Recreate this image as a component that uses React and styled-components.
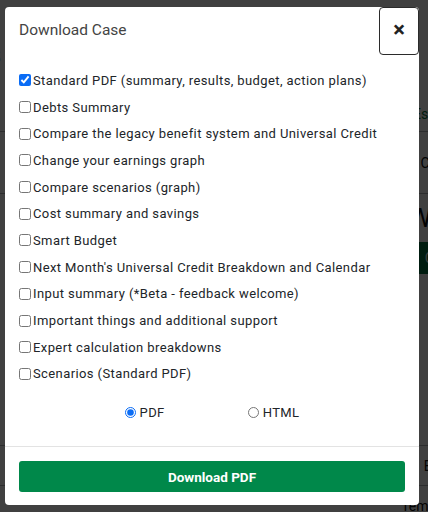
import React, { useState } from 'react';
import styled, { createGlobalStyle } from 'styled-components';

const GlobalStyle = createGlobalStyle`
  html, body {
    margin: 0;
    padding: 0;
  }
  body {
    font-family: Roboto, "Liberation Sans", sans-serif;
    color: #212529;
  }
  * {
    box-sizing: border-box;
  }
`;

// Page behind the dialog
const Page = styled.div`
  position: relative;
  width: 428px;
  height: 512px;
  overflow: hidden;
  background: #fff;
`;

const BackContent = styled.div`
  width: 470px;
  padding-top: 36px;
  display: flex;
  flex-direction: column;
`;

const BackHeading = styled.h1`
  margin: 0 0 0 -14px;
  font-size: 30px;
  font-weight: 400;
  height: 60px;
`;

const BackRow = styled.div`
  height: ${(p) => p.$h || 40}px;
  display: flex;
  align-items: center;
  justify-content: flex-end;
  padding-right: 2px;
  font-size: ${(p) => (p.$big ? 26 : 14)}px;
  color: ${(p) => (p.$link ? '#00703c' : '#0b0c0c')};
  border-bottom: ${(p) => (p.$line ? '1px solid #b1b4b6' : 'none')};
  white-space: nowrap;
`;

const BackBar = styled.span`
  height: 100%;
  padding: 0 8px;
  display: flex;
  align-items: center;
  background: #00703c;
  color: #e6f2ec;
`;

const Overlay = styled.div`
  position: absolute;
  inset: 0;
  background: rgba(0, 0, 0, 0.75);
  padding: 7px 9px 7px 5px;
  display: flex;
`;

// Dialog
const Modal = styled.div`
  flex: 1;
  background: #fff;
  border-radius: 4px;
  display: flex;
  flex-direction: column;
`;

const Header = styled.div`
  display: flex;
  justify-content: space-between;
  align-items: flex-start;
  height: 60px;
`;

const Title = styled.h5`
  margin: 0;
  padding: 13px 0 0 14px;
  font-size: 15.5px;
  font-weight: 400;
  color: #444;
  line-height: 20px;
`;

const CloseButton = styled.button`
  width: 40px;
  height: 48px;
  border: 1.5px solid #2b2b2b;
  border-radius: 4px;
  background: #fff;
  font-family: inherit;
  font-size: 22px;
  font-weight: 700;
  color: #222;
  line-height: 1;
  padding: 0 0 3px;
  cursor: pointer;
`;

const Body = styled.div`
  padding: 0 14px;
  flex: 1;
  display: flex;
  flex-direction: column;
`;

const CheckList = styled.div`
  display: flex;
  flex-direction: column;
`;

const CheckRow = styled.label`
  height: 26.7px;
  display: flex;
  align-items: center;
  gap: 1px;
  font-size: 13px;
  letter-spacing: 0.4px;
  color: #212529;
  white-space: nowrap;

  input {
    width: 12px;
    height: 12px;
    margin: 0 1px 0 0;
    accent-color: #0a6cf5;
  }
`;

const FormatRow = styled.div`
  margin-top: 15px;
  height: 20px;
  display: flex;
  justify-content: center;
  gap: 83px;
  padding-left: 0;
`;

const RadioLabel = styled.label`
  display: flex;
  align-items: center;
  gap: 4px;
  font-size: 13px;
  letter-spacing: 0.4px;
  color: #212529;

  input {
    width: 11px;
    height: 11px;
    margin: 0;
    accent-color: #0a6cf5;
  }
`;

const Footer = styled.div`
  border-top: 1px solid #e3e3e3;
  padding: 14px 14px 13px;
`;

const DownloadButton = styled.button`
  width: 100%;
  height: 31px;
  border: none;
  border-radius: 3px;
  background: #00884a;
  color: #fff;
  font-family: inherit;
  font-size: 13.5px;
  font-weight: 700;
  cursor: pointer;
`;

const options = [
  'Standard PDF (summary, results, budget, action plans)',
  'Debts Summary',
  'Compare the legacy benefit system and Universal Credit',
  'Change your earnings graph',
  'Compare scenarios (graph)',
  'Cost summary and savings',
  'Smart Budget',
  "Next Month's Universal Credit Breakdown and Calendar",
  'Input summary (*Beta - feedback welcome)',
  'Important things and additional support',
  'Expert calculation breakdowns',
  'Scenarios (Standard PDF)',
];

const App = () => {
  const [checked, setChecked] = useState([0]);
  const [format, setFormat] = useState('pdf');

  const toggle = (i) =>
    setChecked((c) => (c.includes(i) ? c.filter((x) => x !== i) : [...c, i]));

  return (
    <>
      <GlobalStyle />
      <Page>
        <BackContent>
          <BackHeading>s</BackHeading>
          <BackRow $h={36} $line $link>Estimate</BackRow>
          <BackRow $h={62} $line>Change</BackRow>
          <BackRow $h={48} $big>Work</BackRow>
          <BackRow $h={32}>
            <BackBar>Close</BackBar>
          </BackRow>
          <BackRow $h={42}>with</BackRow>
          <BackRow $h={44}>Type</BackRow>
          <BackRow $h={42}>Sum</BackRow>
          <BackRow $h={44} $line>Result</BackRow>
          <BackRow $h={40} $line>Budget</BackRow>
          <BackRow $h={40}>Temporary</BackRow>
        </BackContent>

        <Overlay>
          <Modal>
            <Header>
              <Title>Download Case</Title>
              <CloseButton aria-label="Close">×</CloseButton>
            </Header>

            <Body>
              <CheckList>
                {options.map((o, i) => (
                  <CheckRow key={o}>
                    <input
                      type="checkbox"
                      checked={checked.includes(i)}
                      onChange={() => toggle(i)}
                    />
                    {o}
                  </CheckRow>
                ))}
              </CheckList>

              <FormatRow>
                <RadioLabel>
                  <input
                    type="radio"
                    name="format"
                    checked={format === 'pdf'}
                    onChange={() => setFormat('pdf')}
                  />
                  PDF
                </RadioLabel>
                <RadioLabel>
                  <input
                    type="radio"
                    name="format"
                    checked={format === 'html'}
                    onChange={() => setFormat('html')}
                  />
                  HTML
                </RadioLabel>
              </FormatRow>
            </Body>

            <Footer>
              <DownloadButton>
                Download {format === 'pdf' ? 'PDF' : 'HTML'}
              </DownloadButton>
            </Footer>
          </Modal>
        </Overlay>
      </Page>
    </>
  );
};

export default App;
